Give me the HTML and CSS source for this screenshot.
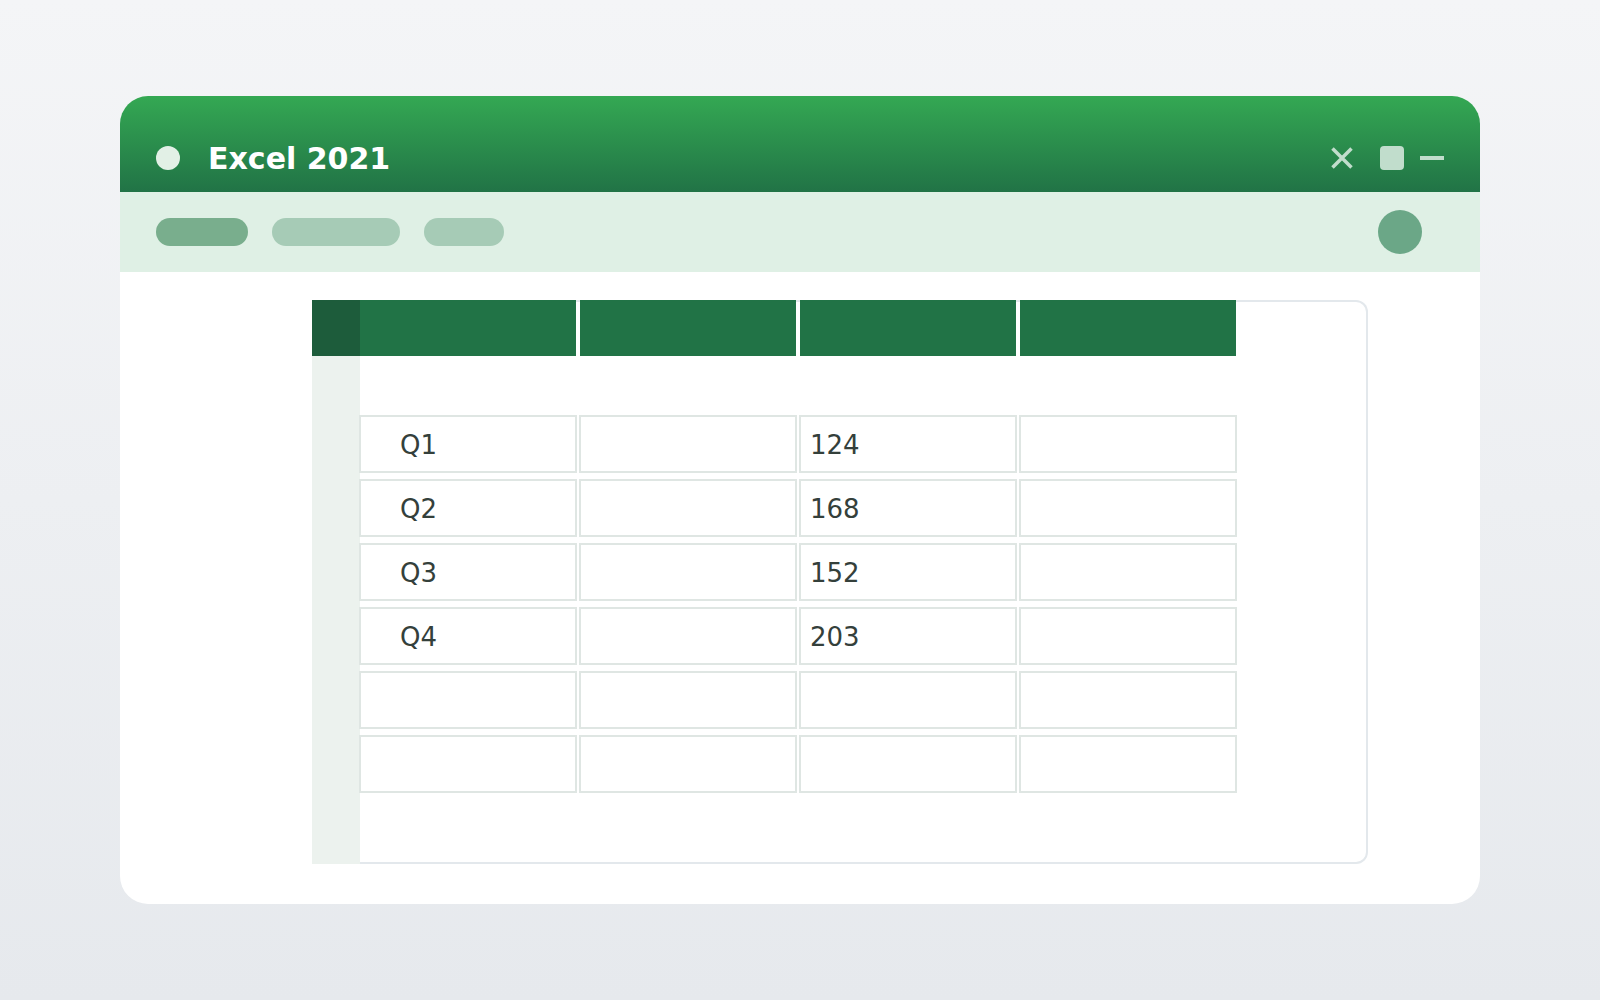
FILE: index.html
```html
<!DOCTYPE html>
<html lang="en">

<head>
    <meta charset="utf-8">
    <title>Excel 2021</title>
    <link rel="stylesheet" href="styles.css">
</head>

<body>

    <div id="window">
        <div id="title-bar">
            <span class="app-dot"></span>
            <span id="app-title">Excel 2021</span>
            <div id="window-controls">
                <svg class="ctl-close" width="24" height="24" viewBox="0 0 24 24">
                    <path d="M2.5 2.5 L21.5 21.5 M21.5 2.5 L2.5 21.5" stroke="#c1ddcc" stroke-width="3.5" fill="none"/>
                </svg>
                <span class="ctl-max"></span>
                <span class="ctl-min"></span>
            </div>
        </div>

        <div id="toolbar">
            <span class="pill pill-active"></span>
            <span class="pill pill-wide"></span>
            <span class="pill pill-short"></span>
            <span class="avatar"></span>
        </div>

        <div id="workspace">
            <div id="sheet">
                <div class="sheet-head">
                    <div class="corner"></div>
                    <div class="col-heads">
                        <div class="col-head"></div>
                        <div class="col-head"></div>
                        <div class="col-head"></div>
                        <div class="col-head"></div>
                    </div>
                </div>
                <div class="sheet-body">
                    <div class="row-nums"></div>
                    <div class="cells" id="cells"></div>
                </div>
            </div>
        </div>
    </div>

    <script>
        const cells = document.getElementById("cells");
        const rows = [
            ["Q1", "", "124", ""],
            ["Q2", "", "168", ""],
            ["Q3", "", "152", ""],
            ["Q4", "", "203", ""],
            ["", "", "", ""],
            ["", "", "", ""]
        ];
        rows.forEach(row => {
            row.forEach((value, i) => {
                const cell = document.createElement("div");
                cell.className = i === 0 ? "cell cell-label" : "cell";
                cell.innerText = value;
                cells.appendChild(cell);
            });
        });
    </script>
</body>

</html>
```

FILE: styles.css
```css
* {
    box-sizing: border-box;
}

body {
    margin: 0;
    height: 100vh;
    padding: 96px 120px;
    background: linear-gradient(180deg, #f4f5f7 0%, #e6e9ed 100%);
    font-family: "DejaVu Sans", "Liberation Sans", sans-serif;
}

#window {
    display: flex;
    flex-direction: column;
    width: 1360px;
    height: 808px;
    background-color: white;
    border-radius: 28px;
    overflow: hidden;
}

#title-bar {
    display: flex;
    align-items: center;
    height: 96px;
    padding: 28px 36px 0 36px;
    background: linear-gradient(180deg, #34a853 0%, #217346 100%);
}

.app-dot {
    width: 24px;
    height: 24px;
    border-radius: 50%;
    background-color: #e2f0e6;
}

#app-title {
    margin-left: 28px;
    font-size: 30px;
    font-weight: bold;
    color: white;
}

#window-controls {
    display: flex;
    align-items: center;
    margin-left: auto;
}

.ctl-close {
    display: block;
}

.ctl-max {
    width: 24px;
    height: 24px;
    margin-left: 26px;
    border-radius: 4px;
    background-color: #c1ddcc;
}

.ctl-min {
    width: 24px;
    height: 4px;
    margin-left: 16px;
    background-color: #c1ddcc;
}

#toolbar {
    display: flex;
    align-items: center;
    gap: 24px;
    height: 80px;
    padding: 0 36px;
    background-color: #dff0e5;
}

.pill {
    height: 28px;
    border-radius: 14px;
    background-color: #a6cbb6;
}

.pill-active {
    width: 92px;
    background-color: #79ae8d;
}

.pill-wide {
    width: 128px;
}

.pill-short {
    width: 80px;
}

.avatar {
    width: 44px;
    height: 44px;
    margin-left: auto;
    margin-right: 22px;
    border-radius: 50%;
    background-color: #6ba787;
}

#workspace {
    flex: 1;
    padding: 28px 112px 40px 192px;
}

#sheet {
    display: flex;
    flex-direction: column;
    width: 1056px;
    height: 564px;
    border-radius: 12px;
    box-shadow: inset 0 0 0 2px #e3e8ec;
}

.sheet-head {
    display: flex;
    height: 56px;
}

.corner {
    width: 48px;
    background-color: #1d5c3b;
}

.col-heads {
    display: flex;
    gap: 4px;
}

.col-head {
    width: 216px;
    background-color: #217346;
}

.sheet-body {
    display: flex;
    flex: 1;
}

.row-nums {
    width: 48px;
    background-color: #ecf2ee;
}

.cells {
    display: grid;
    grid-template-columns: repeat(4, 218px);
    grid-auto-rows: 58px;
    column-gap: 2px;
    row-gap: 6px;
    align-content: start;
    margin-left: -1px;
    padding-top: 59px;
}

.cell {
    display: flex;
    align-items: center;
    padding-left: 9px;
    padding-top: 1px;
    border: 2px solid #dfe6e3;
    background-color: white;
    font-size: 26px;
    color: #34403b;
}

.cell-label {
    padding-left: 39px;
}
```
